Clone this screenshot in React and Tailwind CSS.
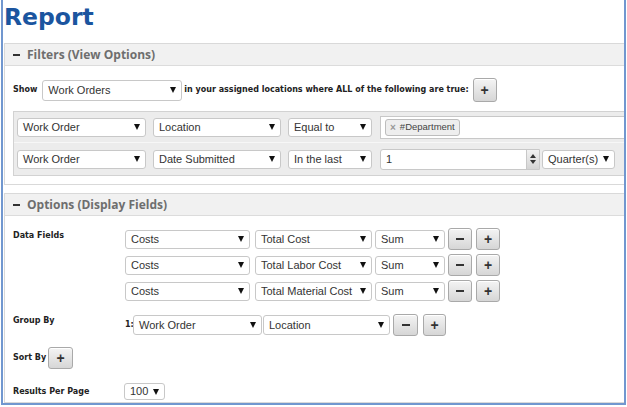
import React from "react";

const ARIAL = { fontFamily: '"Liberation Sans", Arial, sans-serif' };

const Arrow = () => (
  <span className="block h-0 w-0 shrink-0 border-x-[3px] border-t-[6px] border-x-transparent border-t-[#111]" />
);

const Select = ({ value, w, h = "h-[19px]" }) => (
  <div
    className={`${w} ${h} flex shrink-0 items-center justify-between gap-[3px] rounded-[3px] border border-[#c8c8c8] bg-white pl-[5px] pr-[5px] text-[11px] text-[#333]`}
    style={ARIAL}
  >
    <span className="whitespace-nowrap">{value}</span>
    <Arrow />
  </div>
);

const Btn = ({ children, w = "w-[24px]", h = "h-[22px]" }) => (
  <div
    className={`${w} ${h} flex shrink-0 items-center justify-center rounded-[3px] border border-[#a9a9a9] bg-gradient-to-b from-[#f4f4f4] to-[#d6d6d6] text-[14px] font-bold leading-none text-[#333] shadow-[inset_0_1px_0_#fff]`}
    style={ARIAL}
  >
    {children}
  </div>
);

const Minus = () => <span className="block h-[2px] w-[8px] bg-[#333]" />;

const PanelHeader = ({ title }) => (
  <div className="flex h-[22px] items-center border-b border-[#dcdcdc] bg-[#f1f1f1] pl-[8px]">
    <span className="mr-[7px] block h-[2px] w-[7px] bg-[#333]" />
    <span
      className="text-[12px] font-bold text-[#6e6e6e]"
      style={{ fontFamily: '"Open Sans", sans-serif' }}
    >
      {title}
    </span>
  </div>
);

const LABEL = { fontFamily: '"DejaVu Sans", Verdana, sans-serif' };

export default function App() {
  return (
    <div className="h-[407px] w-[627px] overflow-hidden bg-white">
      <div className="ml-px flex h-[405px] w-[625px] flex-col overflow-hidden border-x-2 border-b-2 border-[#7197cf]">
        {/* Title */}
        <div
          className="h-[43px] shrink-0 pl-px pt-[2px] text-[23.5px] font-bold leading-[30px] text-[#1b559f]"
          style={LABEL}
        >
          Report
        </div>

        {/* Filters panel */}
        <div className="ml-px w-[640px] border border-[#d9d9d9]">
          <PanelHeader title="Filters (View Options)" />
          <div className="pl-[8px] pt-[12px] pb-[8px]">
            <div className="flex items-center" style={LABEL}>
              <span className="mr-[5px] text-[8px] font-bold text-[#222]">Show</span>
              <Select value="Work Orders" w="w-[140px]" h="h-[21px]" />
              <span className="ml-[2px] mr-[4px] text-[8px] font-bold text-[#222]">
                in your assigned locations where ALL of the following are true:
              </span>
              <Btn h="h-[24px]">+</Btn>
            </div>

            <div className="mt-[9px] border border-[#d2d2d2] bg-[#ececec]">
              <div className="flex h-[30px] items-center pl-[3px]">
                <Select value="Work Order" w="w-[129px]" />
                <div className="w-[7px]" />
                <Select value="Location" w="w-[128px]" />
                <div className="w-[7px]" />
                <Select value="Equal to" w="w-[84px]" />
                <div className="w-[8px]" />
                <div className="flex h-[23px] flex-1 items-center border border-[#c8c8c8] bg-white pl-[4px]">
                  <div
                    className="flex h-[17px] items-center rounded-[3px] border border-[#bdbdbd] bg-[#eeeeee] pl-[4px] pr-[4px] text-[9.5px] text-[#444]"
                    style={ARIAL}
                  >
                    <span className="mr-[4px] text-[10px] font-bold text-[#999]">×</span>
                    #Department
                  </div>
                </div>
              </div>
              <div className="flex h-[33px] items-center border-t border-[#f7f7f7] pl-[3px]">
                <Select value="Work Order" w="w-[129px]" />
                <div className="w-[7px]" />
                <Select value="Date Submitted" w="w-[128px]" />
                <div className="w-[7px]" />
                <Select value="In the last" w="w-[84px]" />
                <div className="w-[8px]" />
                <div className="flex h-[21px] w-[160px] items-center rounded-l-[3px] border border-[#c8c8c8] bg-white">
                  <span className="flex-1 pl-[5px] text-[11px] text-[#333]" style={ARIAL}>1</span>
                  <div className="flex h-full w-[13px] flex-col items-center justify-center gap-[2px] border-l border-[#c8c8c8] bg-gradient-to-b from-[#f2f2f2] to-[#d4d4d4]">
                    <span className="block h-0 w-0 border-x-[3px] border-b-[4px] border-x-transparent border-b-[#333]" />
                    <span className="block h-0 w-0 border-x-[3px] border-t-[4px] border-x-transparent border-t-[#333]" />
                  </div>
                </div>
                <div className="w-[2px]" />
                <Select value="Quarter(s)" w="w-[73px]" />
              </div>
            </div>
          </div>
        </div>

        {/* Options panel */}
        <div className="ml-px mt-[8px] w-[640px] flex-1 border border-[#d9d9d9]">
          <PanelHeader title="Options (Display Fields)" />
          <div className="pl-[8px] pt-[12px]" style={LABEL}>
            <div className="flex">
              <div className="w-[112px] pt-[2px] text-[8px] font-bold text-[#222]">Data Fields</div>
              <div className="flex flex-col gap-[4px]">
                {["Total Cost", "Total Labor Cost", "Total Material Cost"].map((f) => (
                  <div key={f} className="flex items-center">
                    <Select value="Costs" w="w-[125px]" />
                    <div className="w-[5px]" />
                    <Select value={f} w="w-[117px]" />
                    <div className="w-[3px]" />
                    <Select value="Sum" w="w-[70px]" />
                    <div className="w-[3px]" />
                    <Btn><Minus /></Btn>
                    <div className="w-[4px]" />
                    <Btn>+</Btn>
                  </div>
                ))}
              </div>
            </div>

            <div className="mt-[12px] flex">
              <div className="w-[112px] pt-[1px] text-[8px] font-bold text-[#222]">Group By</div>
              <div className="flex items-center">
                <span className="w-[8px] text-[8px] font-bold text-[#222]">1:</span>
                <Select value="Work Order" w="w-[129px]" h="h-[20px]" />
                <div className="w-px" />
                <Select value="Location" w="w-[127px]" h="h-[20px]" />
                <div className="w-[3px]" />
                <Btn w="w-[25px]">
                  <Minus />
                </Btn>
                <div className="w-[5px]" />
                <Btn w="w-[23px]">+</Btn>
              </div>
            </div>

            <div className="mt-[11px] flex items-center">
              <span className="mr-[2px] text-[8px] font-bold text-[#222]">Sort By</span>
              <Btn w="w-[25px]">+</Btn>
            </div>

            <div className="mt-[14px] flex items-center">
              <div className="w-[111px] text-[8px] font-bold text-[#222]">Results Per Page</div>
              <Select value="100" w="w-[41px]" h="h-[17px]" />
            </div>
          </div>
        </div>
      </div>
    </div>
  );
}
